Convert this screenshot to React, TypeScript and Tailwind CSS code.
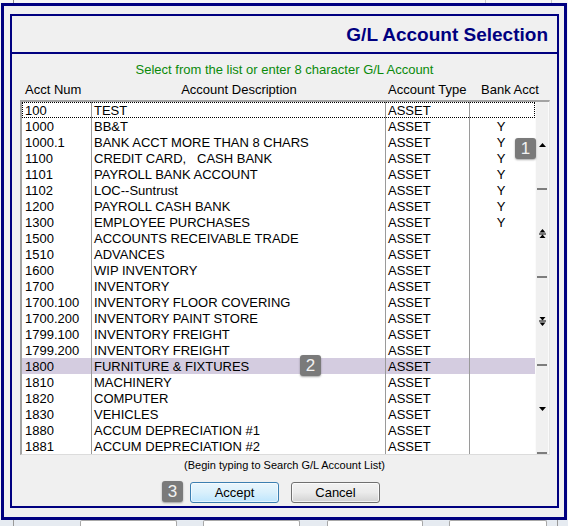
import type { ReactNode } from "react";

type Account = { num: string; desc: string; bank?: boolean };

const accounts: Account[] = [
  { num: "100", desc: "TEST" },
  { num: "1000", desc: "BB&T", bank: true },
  { num: "1000.1", desc: "BANK ACCT MORE THAN 8 CHARS", bank: true },
  { num: "1100", desc: "CREDIT CARD,   CASH BANK", bank: true },
  { num: "1101", desc: "PAYROLL BANK ACCOUNT", bank: true },
  { num: "1102", desc: "LOC--Suntrust", bank: true },
  { num: "1200", desc: "PAYROLL CASH BANK", bank: true },
  { num: "1300", desc: "EMPLOYEE PURCHASES", bank: true },
  { num: "1500", desc: "ACCOUNTS RECEIVABLE TRADE" },
  { num: "1510", desc: "ADVANCES" },
  { num: "1600", desc: "WIP INVENTORY" },
  { num: "1700", desc: "INVENTORY" },
  { num: "1700.100", desc: "INVENTORY FLOOR COVERING" },
  { num: "1700.200", desc: "INVENTORY PAINT STORE" },
  { num: "1799.100", desc: "INVENTORY FREIGHT" },
  { num: "1799.200", desc: "INVENTORY FREIGHT" },
  { num: "1800", desc: "FURNITURE & FIXTURES" },
  { num: "1810", desc: "MACHINERY" },
  { num: "1820", desc: "COMPUTER" },
  { num: "1830", desc: "VEHICLES" },
  { num: "1880", desc: "ACCUM DEPRECIATION #1" },
  { num: "1881", desc: "ACCUM DEPRECIATION #2" }
];

const SELECTED = "1800";

function Badge({ n, className }: { n: number; className: string }) {
  return (
    <div
      className={`absolute flex h-[21px] w-[21px] items-center justify-center rounded-[3px] bg-[#7a7a7a] text-[17px] leading-none text-[#f2f2f2] shadow-[0_1px_2px_rgba(0,0,0,0.35)] ${className}`}
    >
      {n}
    </div>
  );
}

function Arrow({ kind }: { kind: "up" | "down" | "pageUp" | "pageDown" }) {
  if (kind === "up") {
    return (
      <svg width="7" height="4" viewBox="0 0 7 4">
        <path d="M3.5 0 L7 4 L0 4 Z" fill="#000" />
      </svg>
    );
  }
  if (kind === "down") {
    return (
      <svg width="7" height="4" viewBox="0 0 7 4">
        <path d="M0 0 L7 0 L3.5 4 Z" fill="#000" />
      </svg>
    );
  }
  if (kind === "pageUp") {
    return (
      <svg width="7" height="9" viewBox="0 0 7 9">
        <path d="M3.5 0 L6.5 3.5 L0.5 3.5 Z" fill="#000" />
        <rect x="0" y="4.5" width="7" height="1" fill="#000" />
        <path d="M3.5 5.5 L6.5 9 L0.5 9 Z" fill="#000" />
      </svg>
    );
  }
  return (
    <svg width="7" height="9" viewBox="0 0 7 9">
      <path d="M0.5 0 L6.5 0 L3.5 3.5 Z" fill="#000" />
      <rect x="0" y="3.5" width="7" height="1" fill="#000" />
      <path d="M0.5 5.5 L6.5 5.5 L3.5 9 Z" fill="#000" />
    </svg>
  );
}

function ScrollSegment({ children }: { children: ReactNode }) {
  return (
    <div className="flex h-[88px] flex-col">
      <div className="flex flex-1 items-center justify-center">{children}</div>
      <div className="mx-[1px] h-[2px] bg-[#7d7d7d]" />
    </div>
  );
}

function AccountRow({ a, first }: { a: Account; first: boolean }) {
  const selected = a.num === SELECTED;
  return (
    <div className={`relative flex h-[16px] leading-[17px] ${selected ? "bg-[#d4cce0]" : ""}`}>
      <div className="w-[70px] border-r border-[#9a9a9a] pl-[3px]">{a.num}</div>
      <div className="w-[294px] whitespace-pre border-r border-[#9a9a9a] pl-[2px]">{a.desc}</div>
      <div className="w-[84px] border-r border-[#9a9a9a] pl-[2px]">ASSET</div>
      <div className="w-[65px] pr-[3px] text-center">{a.bank ? "Y" : ""}</div>
      {first ? <div className="pointer-events-none absolute inset-0 border border-dotted border-black" /> : null}
    </div>
  );
}

export default function App() {
  return (
    <div className="relative flex h-[526px] w-[568px] flex-col overflow-hidden bg-[#f4f4f4] font-['Liberation_Sans',Arial,sans-serif] text-black">
      {/* strip of the window behind the dialog */}
      <div className="flex h-[3px] bg-[#f7f7f7]">
        <div className="ml-[13px] w-[1px] bg-[#8a8a8a]" />
        <div className="ml-[471px] w-[1px] bg-[#c8c8c8]" />
        <div className="ml-[65px] w-[1px] bg-[#c8c8c8]" />
      </div>

      <div className="mx-[1px] h-[517px] border-[3px] border-[#000080] bg-[#f0f0f0] pb-[9px] pl-[6px] pr-[5px] pt-[8px]">
        <div className="flex h-full flex-col border-2 border-[#000080]">
          <div className="flex h-[38px] justify-end border-b-2 border-[#000080] pr-[9px] pt-[8px]">
            <h1 className="text-[19px] font-bold leading-[22px] text-[#000080]">G/L Account Selection</h1>
          </div>

          <div className="flex flex-1 flex-col pt-[8px] text-[13px]">
            <p className="text-center leading-[15px] text-[#0a8a0a]">
              Select from the list or enter 8 character G/L Account
            </p>

            <div className="ml-[8px] mt-[5px] flex w-[530px] pl-[2px] leading-[15px]">
              <div className="w-[70px] pl-[3px]">Acct Num</div>
              <div className="w-[294px] text-center">Account Description</div>
              <div className="w-[84px] pl-[2px]">Account Type</div>
              <div className="flex-1 text-center">Bank Acct</div>
            </div>

            <div className="ml-[8px] mt-[3px] flex h-[355px] w-[530px] border-b border-l-2 border-r border-t-2 border-b-[#dcdcdc] border-l-[#a3a3a3] border-r-[#e6e6e6] border-t-[#a3a3a3]">
              <div className="w-[513px] bg-white">
                {accounts.map((a, i) => (
                  <AccountRow key={a.num + i} a={a} first={i === 0} />
                ))}
              </div>
              <div className="flex w-[14px] flex-col border-x border-[#fbfbfb] bg-[#f0f0f0]">
                <ScrollSegment>
                  <Arrow kind="up" />
                </ScrollSegment>
                <ScrollSegment>
                  <Arrow kind="pageUp" />
                </ScrollSegment>
                <ScrollSegment>
                  <Arrow kind="pageDown" />
                </ScrollSegment>
                <ScrollSegment>
                  <Arrow kind="down" />
                </ScrollSegment>
              </div>
            </div>

            <p className="mt-[4px] text-center text-[11px] leading-[13px]">(Begin typing to Search G/L Account List)</p>

            <div className="mt-[10px] flex justify-center gap-[12px] pl-[1px]">
              <button
                type="button"
                className="h-[21px] w-[89px] rounded-[3px] border border-[#3c7fb1] bg-gradient-to-b from-[#eaf6fd] via-[#d9f0fc] to-[#bee6fd] text-[13px] leading-[19px] shadow-[inset_0_0_0_1px_rgba(255,255,255,0.6)]"
              >
                Accept
              </button>
              <button
                type="button"
                className="h-[21px] w-[89px] rounded-[3px] border border-[#707070] bg-gradient-to-b from-[#f2f2f2] via-[#ebebeb] to-[#d2d2d2] text-[13px] leading-[19px] shadow-[inset_0_0_0_1px_rgba(255,255,255,0.7)]"
              >
                Cancel
              </button>
            </div>
          </div>
        </div>
      </div>

      {/* bottom edge of the window behind */}
      <div className="flex h-[6px] bg-[#e6ebf1]">
        <div className="ml-[13px] w-[1px] bg-[#9a9a9a]" />
        <div className="ml-[66px] w-[97px] rounded-t-[2px] border-x border-t border-[#a8a8a8] bg-white" />
        <div className="ml-[26px] w-[97px] rounded-t-[2px] border-x border-t border-[#a8a8a8] bg-white" />
        <div className="ml-[27px] w-[96px] rounded-t-[2px] border-x border-t border-[#a8a8a8] bg-white" />
        <div className="ml-[26px] w-[98px] rounded-t-[2px] border-x border-t border-[#a8a8a8] bg-white" />
        <div className="ml-[10px] w-[1px] bg-[#9a9a9a]" />
      </div>

      <Badge n={1} className="left-[515px] top-[138px]" />
      <Badge n={2} className="left-[300px] top-[355px]" />
      <Badge n={3} className="left-[162px] top-[481px]" />
    </div>
  );
}
